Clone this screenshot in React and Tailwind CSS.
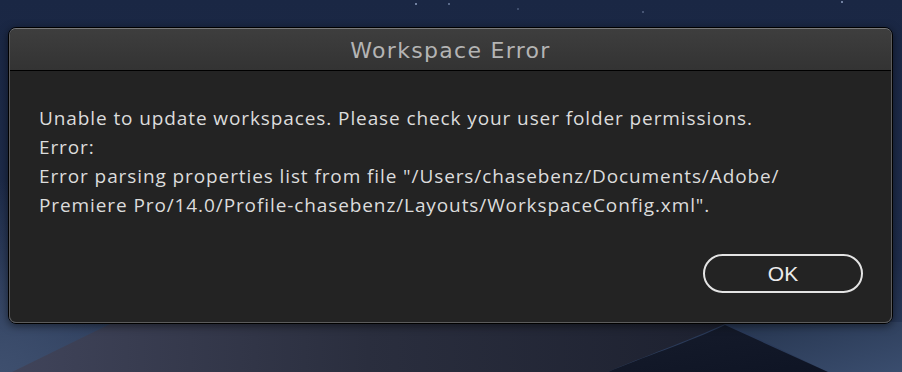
import React from "react";

export default function App() {
  return (
    <div className="relative w-[902px] h-[372px] overflow-hidden bg-[#1b2845]">
      <svg className="absolute inset-0" width="902" height="372" viewBox="0 0 902 372">
        <defs>
          <linearGradient id="sky" x1="0" y1="0" x2="0" y2="1">
            <stop offset="0" stopColor="#1a2744" />
            <stop offset="0.7" stopColor="#1e2c4a" />
            <stop offset="1" stopColor="#2e3f5e" />
          </linearGradient>
          <radialGradient id="corner" cx="0" cy="1" r="1">
            <stop offset="0" stopColor="#3e4f6e" stopOpacity="1" />
            <stop offset="1" stopColor="#3e4f6e" stopOpacity="0" />
          </radialGradient>
          <linearGradient id="duneL" x1="0" y1="0" x2="1" y2="0">
            <stop offset="0" stopColor="#40445a" />
            <stop offset="0.5" stopColor="#2a2e3e" />
            <stop offset="1" stopColor="#1d2130" />
          </linearGradient>
          <linearGradient id="duneR" x1="0" y1="0" x2="1" y2="1">
            <stop offset="0" stopColor="#161c2c" />
            <stop offset="1" stopColor="#0e1424" />
          </linearGradient>
          <linearGradient id="rightSky" x1="0" y1="0" x2="1" y2="1">
            <stop offset="0" stopColor="#26354f" />
            <stop offset="1" stopColor="#3a4d6e" />
          </linearGradient>
        </defs>
        <rect width="902" height="372" fill="url(#sky)" />
        <rect x="0" y="180" width="200" height="192" fill="url(#corner)" />
        <path d="M725 322 L902 322 L902 372 L828 372 Z" fill="url(#rightSky)" />
        <path d="M12 372 L110 324 L725 324 C690 340 640 358 608 372 Z" fill="url(#duneL)" />
        <path d="M725 325 C690 342 640 358 608 372 L828 372 Z" fill="url(#duneR)" />
        <circle cx="416" cy="4" r="1" fill="#8fa0c0" />
        <circle cx="449" cy="4" r="1" fill="#6f80a0" />
        <circle cx="518" cy="9" r="0.8" fill="#6f80a0" />
        <circle cx="643" cy="12" r="0.8" fill="#7f90b0" />
        <circle cx="842" cy="2" r="1" fill="#8fa0c0" />
      </svg>

      <div className="relative ml-[8px] mt-[27px] w-[885px] h-[297px] rounded-[8px] border border-black shadow-[0_2px_8px_rgba(0,0,0,0.5)]">
        <div className="h-full flex flex-col rounded-[7px] border border-[#5c5c5c] border-t-[#7a7a7a] overflow-hidden bg-[#232323]">
          <div className="h-[42px] shrink-0 flex items-center justify-center bg-gradient-to-b from-[#3e3e3e] to-[#333333] border-b border-black">
            <span className="text-[22px] text-[#b4b4b4] font-['DejaVu_Sans',sans-serif] tracking-[1.3px] leading-none pt-[2px]">
              Workspace Error
            </span>
          </div>
          <div className="flex-1 flex flex-col pl-[29px] pr-[28px] pt-[33px]">
            <div className="text-[19px] leading-[29px] text-[#dcdcdc] font-['Open_Sans',sans-serif] tracking-[0.9px]">
              <div>Unable to update workspaces. Please check your user folder permissions.</div>
              <div>Error:</div>
              <div>Error parsing properties list from file "/Users/chasebenz/Documents/Adobe/</div>
              <div>Premiere Pro/14.0/Profile-chasebenz/Layouts/WorkspaceConfig.xml".</div>
            </div>
            <div className="flex justify-end mt-[34px]">
              <button className="w-[160px] h-[39px] rounded-full border-2 border-[#e4e4e4] text-[21px] text-[#ececec] font-['Liberation_Sans',Arial,sans-serif] leading-none">
                OK
              </button>
            </div>
          </div>
        </div>
      </div>
    </div>
  );
}
